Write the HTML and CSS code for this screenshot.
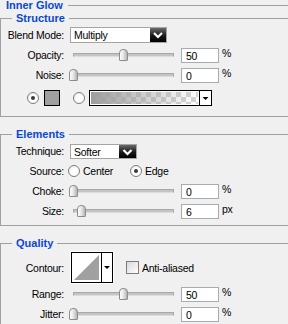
FILE: index.html
```html
<!DOCTYPE html>
<html lang="en">
<head>
  <meta charset="UTF-8">
  <title>Inner Glow</title>
  <link rel="stylesheet" href="styles.css">
</head>
<body>

  <div class="title"><span>Inner Glow</span><i class="rule"></i></div>

  <fieldset class="group structure">
    <legend>Structure</legend>
    <div class="row">
      <span class="lbl">Blend Mode:</span>
      <div class="select blend">
        <span class="val">Multiply</span>
        <span class="arrow"><svg width="16" height="15" viewBox="0 0 16 15"><path d="M4 5 L8 9 L12 5" fill="none" stroke="#fff" stroke-width="2.2"/></svg></span>
      </div>
    </div>
    <div class="row">
      <span class="lbl">Opacity:</span>
      <div class="slider"><div class="track"></div><div class="thumb" style="--v:0.5"></div></div>
      <span class="num">50</span><span class="unit">%</span>
    </div>
    <div class="row">
      <span class="lbl">Noise:</span>
      <div class="slider"><div class="track"></div><div class="thumb" style="--v:0"></div></div>
      <span class="num">0</span><span class="unit">%</span>
    </div>
    <div class="row color-row">
      <span class="radio on"></span>
      <span class="swatch"></span>
      <span class="radio"></span>
      <div class="grad">
        <span class="grad-fill"></span>
        <span class="drop"><svg width="11" height="14" viewBox="0 0 11 14"><path d="M2.5 6 H8.5 L5.5 9 Z" fill="#000"/></svg></span>
      </div>
    </div>
  </fieldset>

  <fieldset class="group elements">
    <legend>Elements</legend>
    <div class="row">
      <span class="lbl">Technique:</span>
      <div class="select technique">
        <span class="val">Softer</span>
        <span class="arrow"><svg width="17" height="14" viewBox="0 0 17 14"><path d="M4.5 5 L8.5 9 L12.5 5" fill="none" stroke="#fff" stroke-width="2.2"/></svg></span>
      </div>
    </div>
    <div class="row">
      <span class="lbl">Source:</span>
      <span class="radio src"></span><span class="opt">Center</span>
      <span class="radio on src edge"></span><span class="opt">Edge</span>
    </div>
    <div class="row">
      <span class="lbl">Choke:</span>
      <div class="slider"><div class="track"></div><div class="thumb" style="--v:0"></div></div>
      <span class="num">0</span><span class="unit">%</span>
    </div>
    <div class="row">
      <span class="lbl">Size:</span>
      <div class="slider"><div class="track"></div><div class="thumb" style="--v:0.08"></div></div>
      <span class="num">6</span><span class="unit">px</span>
    </div>
  </fieldset>

  <fieldset class="group quality">
    <legend>Quality</legend>
    <div class="row contour-row">
      <span class="lbl">Contour:</span>
      <div class="contour">
        <svg class="preview" width="29" height="29" viewBox="0 0 29 29"><path d="M2 27 L27 2 L27 27 Z" fill="#a0a0a3"/></svg>
        <span class="drop"><svg width="10" height="29" viewBox="0 0 10 29"><path d="M2 13 H8 L5 16 Z" fill="#000"/></svg></span>
      </div>
      <span class="check"></span><span class="opt">Anti-aliased</span>
    </div>
    <div class="row">
      <span class="lbl">Range:</span>
      <div class="slider"><div class="track"></div><div class="thumb" style="--v:0.5"></div></div>
      <span class="num">50</span><span class="unit">%</span>
    </div>
    <div class="row">
      <span class="lbl">Jitter:</span>
      <div class="slider"><div class="track"></div><div class="thumb" style="--v:0"></div></div>
      <span class="num">0</span><span class="unit">%</span>
    </div>
  </fieldset>

</body>
</html>
```

FILE: styles.css
```css
body {
  margin: 0;
  width: 288px;
  height: 324px;
  overflow: hidden;
  background: #f0f0f0;
  font-family: 'Liberation Sans', Arial, sans-serif;
  font-size: 10.5px;
  letter-spacing: -0.25px;
  color: #000;
}
.title {
  display: flex;
  align-items: center;
  height: 12px;
  margin-top: -1px;
  padding-left: 6px;
}
.title span, legend {
  font-weight: bold;
  font-size: 11px;
  line-height: 12px;
  letter-spacing: 0;
  color: #0a47d6;
}
.rule {
  flex: 1;
  height: 1px;
  background: #a0a0a0;
  margin-left: 5px;
}
.group {
  margin: 1px 0 0 0;
  padding: 0 0 8px 0;
  border: 1px solid #a0a0a0;
  border-right: none;
  min-width: 0;
}
.elements { margin-top: 11px; padding-bottom: 4px; }
.quality { margin-top: 11px; padding-bottom: 0; }
legend {
  margin-left: 11px;
  padding: 0 4px;
}
.row {
  display: flex;
  align-items: center;
  height: 20px;
}
.structure .row:first-of-type { margin-top: 1px; }
.elements .row:first-of-type { margin-top: 1px; }
.lbl {
  width: 63px;
  flex: none;
  margin-right: 5px;
  text-align: right;
  white-space: nowrap;
}

/* dropdowns */
.select {
  display: flex;
  height: 16px;
  margin-left: 1px;
  border: 1px solid #a5a5a5;
  box-sizing: border-box;
  background: #fff;
}
.select.blend { width: 97px; }
.select.technique { width: 67px; height: 15px; }
.select .val {
  flex: 1;
  padding-left: 3px;
  line-height: 14px;
}
.select .arrow {
  display: flex;
  width: 16px;
  background: linear-gradient(#6a6a6a, #1a1a1a 55%, #000);
}
.select.technique .arrow { width: 17px; }

/* sliders */
.slider {
  position: relative;
  width: 109px;
  height: 12px;
  flex: none;
}
.track {
  margin: 4px 4px 0 4px;
  height: 4px;
  box-sizing: border-box;
  border: 1px solid #a8a8a8;
  border-bottom-color: #dcdcdc;
  background: #c4c4c4;
}
.thumb {
  position: absolute;
  top: 0;
  left: calc(var(--v) * (100% - 9px));
  width: 9px;
  height: 12px;
  box-sizing: border-box;
  border: 1px solid #8c8c8c;
  border-radius: 4px 4px 1px 1px;
  background: linear-gradient(90deg, #fdfdfd, #e8e8e8 45%, #b4b4b4);
}
.num {
  width: 38px;
  height: 15px;
  margin-left: 3px;
  box-sizing: border-box;
  border: 1px solid #a5acb3;
  background: #fff;
  padding-left: 4px;
  line-height: 14px;
  flex: none;
}
.unit {
  margin-left: 3px;
  align-self: flex-start;
  margin-top: 2px;
}

/* radios, swatch, gradient */
.radio {
  width: 12px;
  height: 12px;
  box-sizing: border-box;
  border: 1px solid #7c7c7c;
  border-radius: 50%;
  background: radial-gradient(circle at 60% 60%, #fff 40%, #e6e6e6);
  position: relative;
  flex: none;
}
.radio.on::after {
  content: "";
  position: absolute;
  left: 3px;
  top: 3px;
  width: 4px;
  height: 4px;
  border-radius: 50%;
  background: #3a3a3a;
}
.color-row {
  height: 20px;
  margin-top: 3px;
}
.color-row .radio:first-child { margin-left: 26px; }
.swatch {
  width: 16px;
  height: 16px;
  margin-left: 5px;
  box-sizing: border-box;
  border: 1px solid #000;
  background: #a0a0a0;
}
.color-row .radio:nth-child(3) { margin-left: 13px; }
.grad {
  display: flex;
  width: 123px;
  height: 16px;
  margin-left: 4px;
  box-sizing: border-box;
  border: 1px solid #000;
  background: #fff;
}
.grad-fill {
  flex: 1;
  margin: 1px;
  background:
    linear-gradient(90deg, #9d9d9d, rgba(157,157,157,0)),
    conic-gradient(#d4d4d4 25%, #fff 0 50%, #d4d4d4 0 75%, #fff 0) 0 0 / 10px 10px;
}
.grad .drop {
  display: flex;
  width: 11px;
  border-left: 1px solid #000;
}
.src { margin-left: -1px; }
.opt { margin-left: 3px; }
.edge { margin-left: 17px; }

/* contour */
.contour-row {
  height: 33px;
  margin-top: 2px;
}
.contour {
  display: flex;
  width: 42px;
  height: 31px;
  margin-left: 2px;
  box-sizing: border-box;
  border: 1px solid #000;
  outline: 1px solid #fff;
  background: #fff;
}
.preview { display: block; }
.contour .drop {
  display: flex;
  width: 10px;
  border-left: 1px solid #000;
}
.check {
  width: 13px;
  height: 13px;
  margin-left: 13px;
  box-sizing: border-box;
  border: 1px solid #7c7c7c;
  background: linear-gradient(135deg, #d8d8d8, #fff);
}
```
